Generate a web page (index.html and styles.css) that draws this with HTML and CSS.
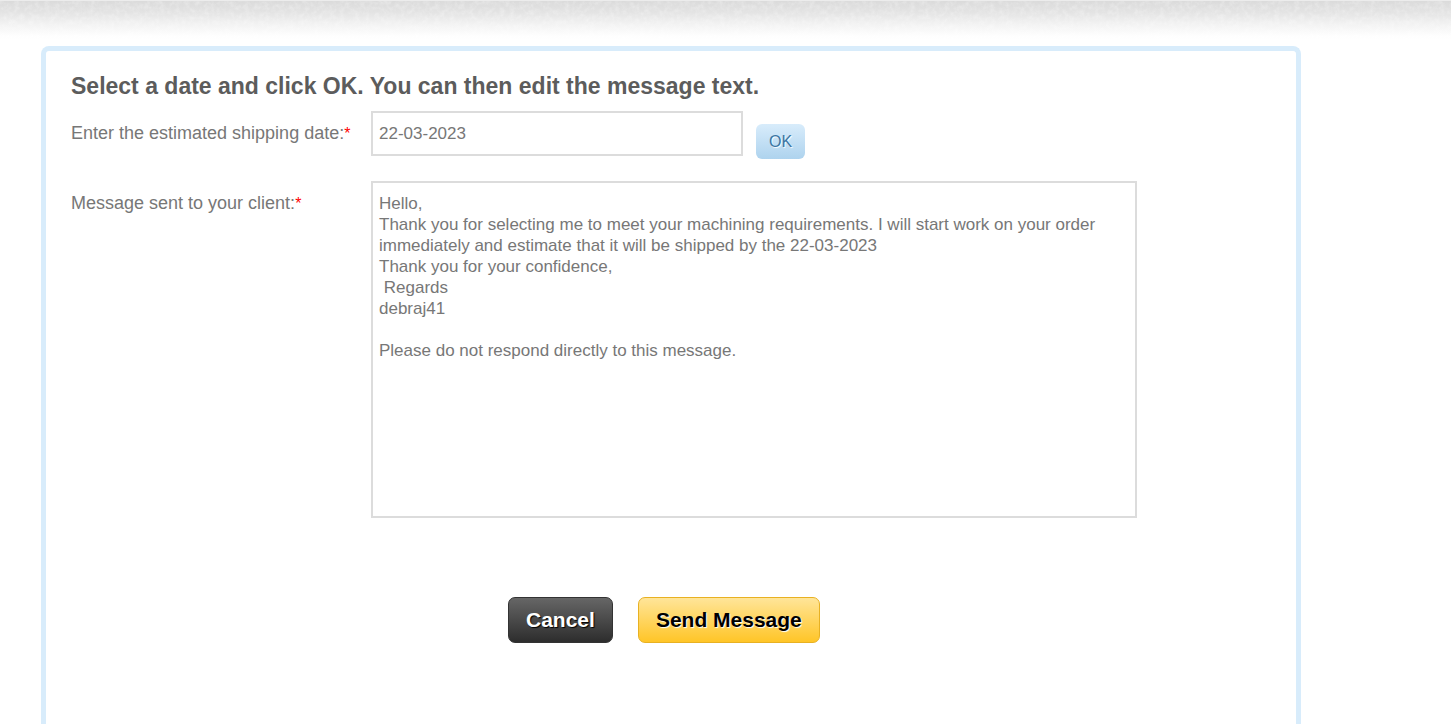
FILE: index.html
```html
<!DOCTYPE html>
<html lang="en">
<head>
<meta charset="utf-8">
<meta name="viewport" content="width=device-width, initial-scale=1">
<title>Shipping date message</title>
<link rel="stylesheet" href="styles.css">
</head>
<body>
<svg class="header-band" aria-hidden="true">
  <defs>
    <filter id="grain" x="0" y="0" width="100%" height="100%">
      <feTurbulence type="fractalNoise" baseFrequency="0.2" numOctaves="3" seed="4"/>
      <feColorMatrix values="0 0 0 0 1  0 0 0 0 1  0 0 0 0 1  1.3 0 0 0 -0.5"/>
    </filter>
    <linearGradient id="shade" x1="0" y1="0" x2="0" y2="1">
      <stop offset="0" stop-color="#dadada"/>
      <stop offset="0.3" stop-color="#e3e3e3"/>
      <stop offset="0.6" stop-color="#f2f2f2"/>
      <stop offset="0.9" stop-color="#fefefe"/>
      <stop offset="1" stop-color="#ffffff"/>
    </linearGradient>
  </defs>
  <rect width="100%" height="100%" fill="url(#shade)"/>
  <rect width="100%" height="100%" filter="url(#grain)" opacity="0.45"/>
  <rect width="100%" height="1" fill="#ececec"/>
</svg>
<main class="panel">
  <h1 class="title">Select a date and click OK. You can then edit the message text.</h1>
  <form class="form">
    <div class="row">
      <label class="label" for="date">Enter the estimated shipping date:<span class="required">*</span></label>
      <input class="field date" id="date" type="text" value="22-03-2023">
      <button class="ok" type="button">OK</button>
    </div>
    <div class="row">
      <label class="label" for="message">Message sent to your client:<span class="required">*</span></label>
      <textarea class="field message" id="message" spellcheck="false">Hello,
Thank you for selecting me to meet your machining requirements. I will start work on your order immediately and estimate that it will be shipped by the 22-03-2023
Thank you for your confidence,
 Regards
debraj41

Please do not respond directly to this message.</textarea>
    </div>
    <div class="actions">
      <button class="button cancel" type="button">Cancel</button>
      <button class="button send" type="submit">Send Message</button>
    </div>
  </form>
</main>
</body>
</html>
```
FILE: styles.css
```css
* {
  box-sizing: border-box;
}

body {
  margin: 0;
  min-height: 100vh;
  display: flex;
  flex-direction: column;
  background: #fff;
  color: #777;
  font: 18px/21px "Liberation Sans", Arial, sans-serif;
}

.header-band {
  display: block;
  width: 100%;
  height: 40px;
}

.panel {
  flex: 1;
  margin: 6px 150px 0 41px;
  padding: 20px 25px 80px;
  border: 5px solid #d8ecfb;
  border-bottom: 0;
  border-radius: 8px 8px 0 0;
}

.title {
  margin: 0 0 10px;
  color: #5c5c5c;
  font-size: 23px;
  line-height: 30px;
}

.form {
  display: flex;
  flex-direction: column;
  gap: 22px;
}

.row {
  display: flex;
  align-items: flex-start;
}

.label {
  flex: 0 0 300px;
  padding-top: 12px;
}

.required {
  color: #f00;
  font-size: 16px;
}

.field {
  margin: 0;
  border: 2px solid #dcdcdc;
  border-radius: 0;
  background: #fff;
  color: #777;
  font: 17px/21px "Liberation Sans", Arial, sans-serif;
  outline: 0;
}

.date {
  width: 372px;
  height: 45px;
  padding: 0 6px;
}

.ok {
  height: 35px;
  margin: 13px 0 0 13px;
  padding: 0 13px;
  border: 0;
  border-radius: 6px;
  background: linear-gradient(#d8ecfb, #aed3ee);
  color: #3a76a4;
  font: 16px/35px "Liberation Sans", Arial, sans-serif;
  text-shadow: 1px 1px 1px #fff;
}

.message {
  flex: 0 1 766px;
  height: 337px;
  padding: 10px 6px;
  resize: none;
  overflow: auto;
}

.actions {
  display: flex;
  gap: 25px;
  margin: 57px 0 0 437px;
}

.button {
  height: 46px;
  padding: 0 17px;
  border: 1px solid;
  border-radius: 7px;
  font: bold 21px/44px "Liberation Sans", Arial, sans-serif;
}

.cancel {
  border-color: #333;
  background: linear-gradient(#666, #2d2d2d);
  color: #fff;
  text-shadow: 1px 1px 1px #000;
}

.send {
  border-color: #e8b122;
  background: linear-gradient(#ffe599, #ffc527);
  color: #000;
  text-shadow: 1px 1px 1px #fff;
}
```
